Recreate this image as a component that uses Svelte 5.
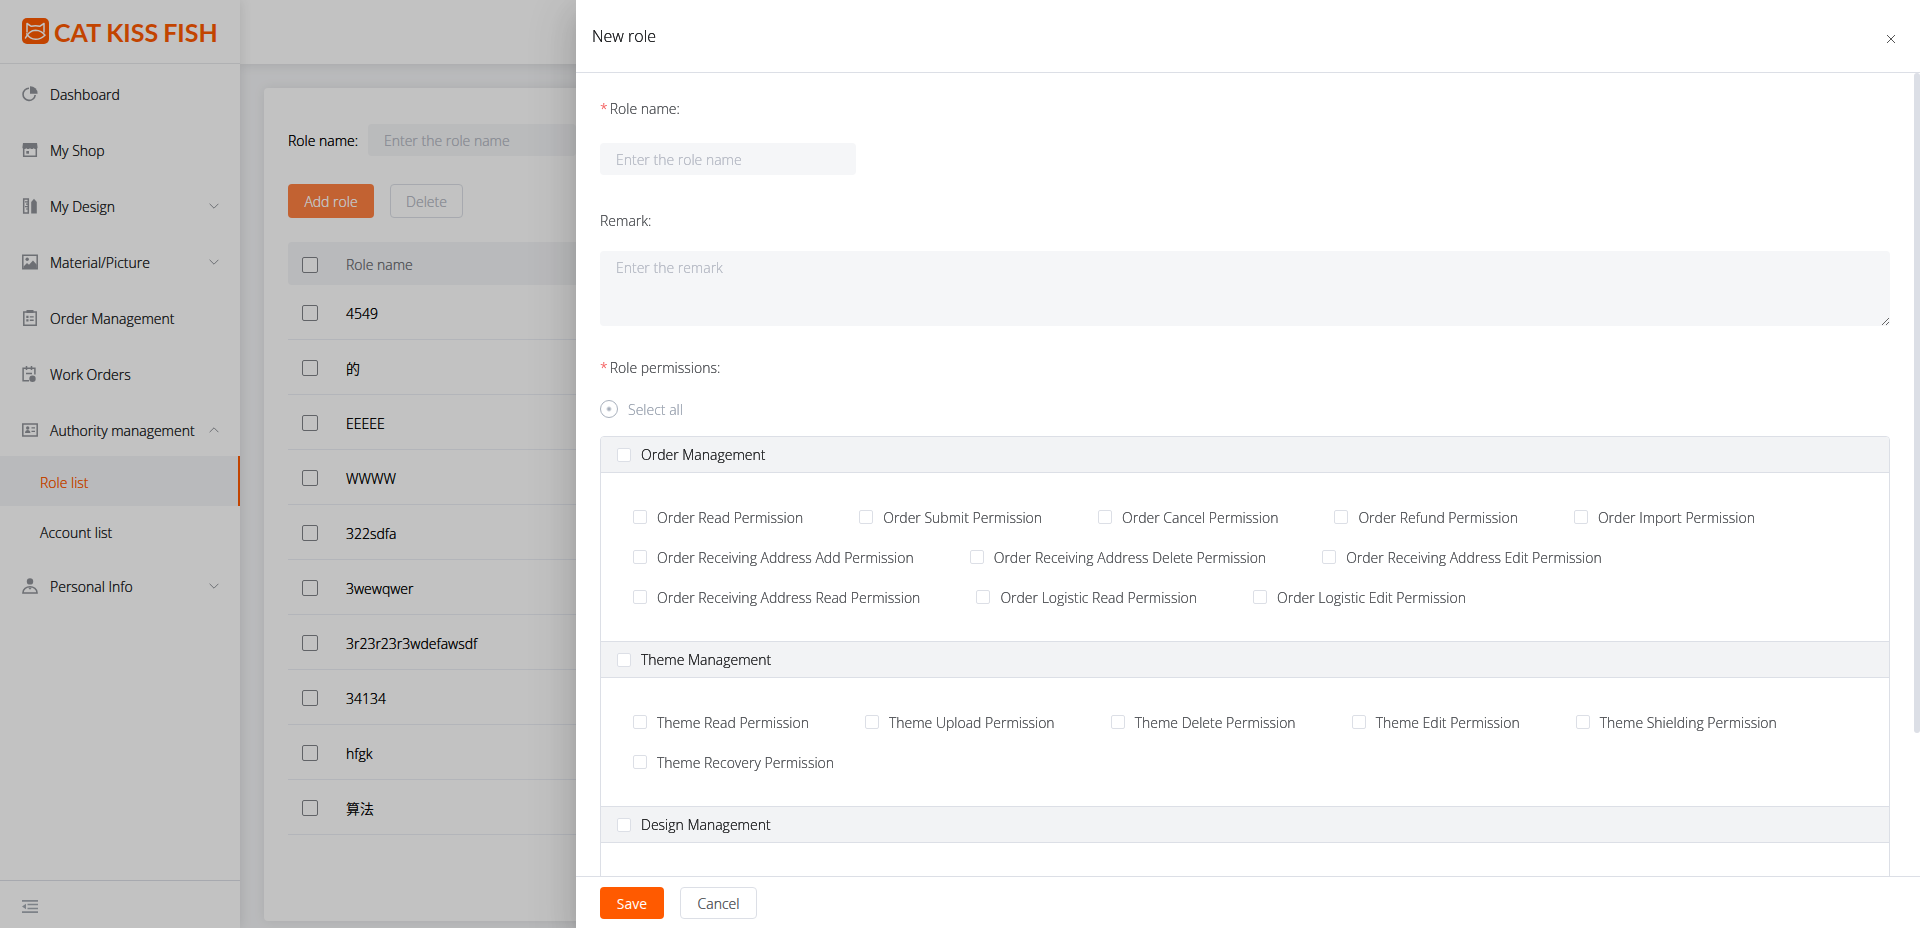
<script lang="ts">
  interface MenuItem {
    label: string;
    icon: string;
    arrow?: "up" | "down";
    children?: string[];
  }

  interface Group {
    name: string;
    permissions: string[];
  }

  const menu: MenuItem[] = [
    { label: "Dashboard", icon: "pie" },
    { label: "My Shop", icon: "shop" },
    { label: "My Design", icon: "design", arrow: "down" },
    { label: "Material/Picture", icon: "picture", arrow: "down" },
    { label: "Order Management", icon: "order" },
    { label: "Work Orders", icon: "work" },
    { label: "Authority management", icon: "card", arrow: "up", children: ["Role list", "Account list"] },
    { label: "Personal Info", icon: "user", arrow: "down" },
  ];

  const roles = ["4549", "的", "EEEEE", "WWWW", "322sdfa", "3wewqwer", "3r23r23r3wdefawsdf", "34134", "hfgk", "算法"];

  const groups: Group[] = [
    {
      name: "Order Management",
      permissions: [
        "Order Read Permission",
        "Order Submit Permission",
        "Order Cancel Permission",
        "Order Refund Permission",
        "Order Import Permission",
        "Order Receiving Address Add Permission",
        "Order Receiving Address Delete Permission",
        "Order Receiving Address Edit Permission",
        "Order Receiving Address Read Permission",
        "Order Logistic Read Permission",
        "Order Logistic Edit Permission",
      ],
    },
    {
      name: "Theme Management",
      permissions: [
        "Theme Read Permission",
        "Theme Upload Permission",
        "Theme Delete Permission",
        "Theme Edit Permission",
        "Theme Shielding Permission",
        "Theme Recovery Permission",
      ],
    },
    { name: "Design Management", permissions: [] },
  ];

  let activeItem = $state("Role list");
  let filterName = $state("");
  let roleName = $state("");
  let remark = $state("");
  let selected = $state<string[]>([]);

  let viewHeight = $state(1);
  let formHeight = $state(1);
  let scrollTop = $state(0);
  let ratio = $derived(Math.min(1, viewHeight / formHeight));

  const allPermissions = groups.flatMap((g) => g.permissions);

  function toggleGroup(group: Group, checked: boolean) {
    const rest = selected.filter((p) => !group.permissions.includes(p));
    selected = checked ? [...rest, ...group.permissions] : rest;
  }
</script>

{#snippet menuIcon(name: string)}
  <svg class="menu-icon" viewBox="0 0 16 16" aria-hidden="true">
    {#if name === "pie"}
      <path d="M7 2.2A6.1 6.1 0 1 0 13.2 9" fill="none" stroke="currentColor" stroke-width="1.6" />
      <path d="M8 0.2A7.4 7.4 0 0 1 15.6 7.7H8z" />
    {:else if name === "shop"}
      <path d="M1 1h14l.6 4.5c0 .9-.8 1.5-1.9 1.5s-1.900-.6-1.900-1.300c0 .7-.8 1.300-1.900 1.300S8 6.400 8 5.700C8 6.400 7.200 7 6.100 7s-1.900-.6-1.900-1.300C4.200 6.400 3.400 7 2.300 7S.4 6.400.4 5.500z" />
      <path d="M1.700 6v8.300h12.600V6" fill="none" stroke="currentColor" stroke-width="1.5" />
      <path d="M4.300 9h2.700v2.700H4.300z" />
    {:else if name === "design"}
      <path d="M1.700 1h4.600v14H1.700z" fill="none" stroke="currentColor" stroke-width="1.5" />
      <path d="M3 3.800h3M4 6.200h2M3 8.600h3M4 11h2" stroke="currentColor" stroke-width="1.2" />
      <path d="M9.200 4L12 .7 14.800 4v11.500H9.200z" />
    {:else if name === "picture"}
      <path d="M.8 1.200h14.400v13.600H.8z" fill="none" stroke="currentColor" stroke-width="1.5" />
      <circle cx="5.2" cy="5.2" r="1.7" />
      <path d="M1.500 12.500L5 9l2 1.800 4-4.300 3.800 4.300v3.700H1.500z" />
    {:else if name === "order"}
      <path d="M1.800 2h12.400v13.200H1.800z" fill="none" stroke="currentColor" stroke-width="1.5" />
      <path d="M4.500 0h7v3h-7zM4.300 5.800h2.200V8H4.300zM7.800 6.200h3.900v1.400H7.800zM4.300 9.200h2.200v2.200H4.300zM7.800 9.600h3.900V11H7.800z" />
    {:else if name === "work"}
      <path d="M7 14.700H1.100V2.300h11.800V8.500M4.500 0v4M9.500 0v4M4 7.500h6" fill="none" stroke="currentColor" stroke-width="1.5" />
      <circle cx="10.5" cy="12.7" r="3.2" />
    {:else if name === "card"}
      <path d="M.8 2h14.400v12H.8z" fill="none" stroke="currentColor" stroke-width="1.5" />
      <circle cx="5.7" cy="6" r="1.7" />
      <path d="M3 11c0-4 5.400-4 5.400 0zM9.500 5.200H13v1.200H9.500zM9.500 8.800H13V10H9.500z" />
    {:else}
      <circle cx="8" cy="3.4" r="3.2" />
      <path d="M.9 14.900c0-8.200 14.200-8.200 14.200 0z" fill="none" stroke="currentColor" stroke-width="1.5" />
      <path d="M6.300 9.800h3.400L8 11.800z" />
    {/if}
  </svg>
{/snippet}

<div class="layout">
  <aside class="sidebar">
    <a class="logo" href="#home" aria-label="CAT KISS FISH">
      <svg class="logo-mark" viewBox="0 0 27 27" aria-hidden="true">
        <rect width="27" height="26" rx="5" fill="#ff5a00" />
        <g fill="none" stroke="#fff" stroke-width="1.5" stroke-linecap="round" stroke-linejoin="round">
          <path d="M5 14V5.500L9.300 8.300Q13.500 7 17.700 8.300L22 5.500V14" />
          <path d="M3.500 20Q7 12.500 13.500 12.300Q19.500 12.500 23 17.200Q18 21.500 13.500 21.300Q8 21 4.700 15.800" />
        </g>
      </svg>
      <span class="logo-text"><span>CAT</span><span>KISS</span><span>FISH</span></span>
    </a>

    <nav class="menu">
      {#each menu as item (item.label)}
        <a class="menu-item" href="#menu">
          {@render menuIcon(item.icon)}
          <span class="menu-label">{item.label}</span>
          {#if item.arrow}
            <svg class="chevron" class:up={item.arrow === "up"} viewBox="0 0 10 10" aria-hidden="true">
              <path d="M0.6 2.8L5 7.2L9.4 2.8" />
            </svg>
          {/if}
        </a>
        {#each item.children ?? [] as child (child)}
          <a class="submenu-item" class:active={activeItem === child} href="#menu" onclick={() => (activeItem = child)}>{child}</a>
        {/each}
      {/each}
    </nav>

    <div class="sidebar-footer">
      <button class="collapse" aria-label="Collapse menu">
        <svg viewBox="0 0 16 16" aria-hidden="true">
          <path d="M0 1h16v1.700H0zM5.500 4.700H16v1.500H5.500zM5.500 8.800H16v1.500H5.500zM0 12.300h16V14H0zM0 7.500L4 4.800v5.400z" />
        </svg>
      </button>
    </div>
  </aside>

  <div class="content">
    <header class="topbar"></header>
    <main class="page">
      <section class="card">
        <div class="filter">
          <label for="filter-name">Role name:</label>
          <input id="filter-name" class="field" type="text" placeholder="Enter the role name" bind:value={filterName} />
        </div>
        <div class="actions">
          <button class="btn add">Add role</button>
          <button class="btn delete" disabled>Delete</button>
        </div>
        <table class="roles">
          <thead>
            <tr>
              <th class="check-col"><input type="checkbox" aria-label="Select all roles" /></th>
              <th>Role name</th>
            </tr>
          </thead>
          <tbody>
            {#each roles as role (role)}
              <tr>
                <td class="check-col"><input type="checkbox" aria-label={role} /></td>
                <td>{role}</td>
              </tr>
            {/each}
          </tbody>
        </table>
      </section>
    </main>
  </div>
</div>

<div class="overlay">
  <div class="drawer" role="dialog" aria-labelledby="drawer-title">
    <header class="drawer-header">
      <h2 id="drawer-title">New role</h2>
      <button class="close" aria-label="Close">
        <svg viewBox="0 0 10 10" aria-hidden="true"><path d="M1 1L9 9M9 1L1 9" /></svg>
      </button>
    </header>

    <div class="drawer-body">
      <div class="scroller" bind:clientHeight={viewHeight} onscroll={(e) => (scrollTop = e.currentTarget.scrollTop)}>
        <form class="form" bind:clientHeight={formHeight}>
          <div class="form-item">
            <label class="form-label required" for="role-name">Role name:</label>
            <input id="role-name" class="field" type="text" placeholder="Enter the role name" bind:value={roleName} />
          </div>
          <div class="form-item remark">
            <label class="form-label" for="remark">Remark:</label>
            <textarea id="remark" class="field" placeholder="Enter the remark" bind:value={remark}></textarea>
          </div>
          <div class="form-label required">Role permissions:</div>
          <label class="select-all">
            <input type="radio" name="select-all" onchange={() => (selected = [...allPermissions])} />
            <span>Select all</span>
          </label>

          <div class="groups">
            {#each groups as group (group.name)}
              <section class="group">
                <label class="group-head">
                  <input class="check" type="checkbox" onchange={(e) => toggleGroup(group, e.currentTarget.checked)} />
                  <span>{group.name}</span>
                </label>
                <div class="group-body">
                  {#each group.permissions as permission (permission)}
                    <label class="permission">
                      <input class="check" type="checkbox" value={permission} bind:group={selected} />
                      <span>{permission}</span>
                    </label>
                  {/each}
                </div>
              </section>
            {/each}
          </div>
        </form>
      </div>
      {#if ratio < 1}
        <div class="thumb" style="height: {viewHeight * ratio}px; top: {scrollTop * ratio}px"></div>
      {/if}
    </div>

    <footer class="drawer-footer">
      <button class="btn save">Save</button>
      <button class="btn cancel">Cancel</button>
    </footer>
  </div>
</div>

<style>
  /* the zero-offset shadow firms up the thin strokes of the light face */
  :global(body) {
    margin: 0;
    font-family: "Open Sans", "Noto Sans CJK SC", sans-serif;
    font-size: 14px;
    font-weight: 300;
    color: #000;
    text-shadow: 0 0 0 currentColor;
  }

  :global(*) {
    box-sizing: border-box;
  }

  a {
    color: inherit;
    text-decoration: none;
  }

  button,
  input,
  textarea {
    font: inherit;
    text-shadow: 0 0 0 currentColor;
    margin: 0;
  }

  .layout {
    display: flex;
    height: 100vh;
    overflow: hidden;
  }

  .sidebar {
    position: relative;
    z-index: 2;
    width: 240px;
    flex: none;
    display: flex;
    flex-direction: column;
    background: #fff;
    color: #222426;
    box-shadow: 0 0 12px rgba(0, 0, 0, 0.12);
  }

  .logo {
    display: flex;
    align-items: center;
    gap: 5px;
    height: 64px;
    padding-left: 22px;
    border-bottom: 1px solid #e8e9eb;
    color: #ff5a00;
    text-shadow: none;
  }

  .logo-mark {
    width: 27px;
    height: 27px;
  }

  .logo-text {
    display: flex;
    gap: 5px;
    font-family: Lato, sans-serif;
    font-size: 25px;
    font-weight: 700;
    line-height: 26px;
  }

  .menu {
    flex: 1;
  }

  .menu-item {
    display: flex;
    align-items: center;
    height: 56px;
    padding: 4px 21px 0 22px;
  }

  .menu-icon {
    width: 16px;
    height: 16px;
    margin-right: 12px;
    color: #909399;
    fill: currentColor;
  }

  .menu-label {
    flex: 1;
    white-space: nowrap;
  }

  .chevron {
    width: 10px;
    height: 10px;
    fill: none;
    stroke: #909399;
    stroke-width: 1;
  }

  .chevron.up {
    transform: rotate(180deg);
  }

  .submenu-item {
    display: flex;
    align-items: center;
    height: 50px;
    padding: 3px 0 0 40px;
    border-right: 2px solid transparent;
  }

  .submenu-item.active {
    background: #f4f5f7;
    border-right-color: #ff5a00;
    color: #ff5a00;
  }

  .sidebar-footer {
    height: 48px;
    padding: 18px 22px 0;
    border-top: 1px solid #dcdfe6;
  }

  .collapse {
    display: block;
    width: 16px;
    height: 16px;
    padding: 0;
    border: 0;
    background: none;
    cursor: pointer;
  }

  .collapse svg {
    display: block;
    fill: #a5abb3;
  }

  .content {
    flex: 1;
    display: flex;
    flex-direction: column;
    background: #f4f5f7;
  }

  .topbar {
    height: 64px;
    background: #fff;
    box-shadow: 0 0 12px rgba(0, 0, 0, 0.12);
  }

  .page {
    flex: 1;
    display: flex;
    padding: 24px 24px 7px;
  }

  .card {
    flex: 1;
    padding: 36px 24px 24px;
    border-radius: 4px;
    background: #fff;
    box-shadow: 0 0 12px rgba(0, 0, 0, 0.08);
  }

  .filter {
    display: flex;
    align-items: center;
  }

  .filter label {
    width: 80px;
  }

  .field {
    display: block;
    border: 0;
    border-radius: 4px;
    background: #f5f6f8;
    color: #606266;
    padding: 0 16px;
  }

  input.field {
    width: 256px;
    height: 32px;
  }

  .filter input.field {
    width: 208px;
  }

  .field::placeholder {
    color: #b8bcc6;
  }

  .actions {
    display: flex;
    gap: 16px;
    margin: 28px 0 24px;
  }

  .btn {
    height: 34px;
    padding: 0 16px;
    border: 0;
    border-radius: 4px;
    background: #fff;
    cursor: pointer;
  }

  .add {
    width: 86px;
    padding: 0;
    background: #ff8142;
    color: #fff;
  }

  .delete {
    width: 73px;
    padding: 0;
    border: 1px solid #dcdfe6;
    color: #b8bcc6;
  }

  .roles {
    width: 100%;
    border-collapse: separate;
    border-spacing: 0;
  }

  th,
  td {
    padding: 2px 0 0;
    text-align: left;
    font-weight: inherit;
  }

  th {
    height: 43px;
    background: #f4f5f7;
    color: #707378;
  }

  th:first-child {
    border-radius: 4px 0 0 4px;
  }

  td {
    height: 55px;
    border-bottom: 1px solid #ebeef5;
  }

  .roles .check-col {
    width: 58px;
    padding-left: 14px;
  }

  input[type="checkbox"],
  input[type="radio"] {
    appearance: none;
    display: block;
    flex: none;
    background: #fff;
    cursor: pointer;
  }

  .roles input {
    width: 16px;
    height: 16px;
    border: 1px solid #808388;
    border-radius: 2px;
  }

  .overlay {
    position: fixed;
    inset: 0;
    z-index: 10;
    display: flex;
    justify-content: flex-end;
    background: rgba(0, 0, 0, 0.24);
  }

  .drawer {
    width: 70%;
    display: flex;
    flex-direction: column;
    background: #fff;
    box-shadow:
      0 16px 48px 16px rgba(0, 0, 0, 0.08),
      0 12px 32px rgba(0, 0, 0, 0.12),
      0 8px 16px -8px rgba(0, 0, 0, 0.16);
  }

  .drawer-header {
    display: flex;
    align-items: center;
    justify-content: space-between;
    height: 73px;
    padding: 0 20px 0 16px;
    border-bottom: 1px solid #dcdfe6;
  }

  h2 {
    margin: 0;
    font-size: 16px;
    font-weight: inherit;
    color: #1d1e20;
  }

  .close {
    width: 18px;
    height: 18px;
    margin-top: 6px;
    padding: 4px;
    border: 0;
    background: none;
    cursor: pointer;
  }

  .close svg {
    display: block;
    stroke: #555;
    stroke-width: 1;
  }

  .drawer-body {
    position: relative;
    flex: 1;
    min-height: 0;
  }

  .scroller {
    height: 100%;
    overflow-y: auto;
    scrollbar-width: none;
  }

  .thumb {
    position: absolute;
    right: 0;
    width: 6px;
    border-radius: 3px;
    background: #dcdfe6;
  }

  .form {
    padding: 20px 30px 38px 24px;
    color: #55575b;
  }

  .form-item {
    display: flex;
    flex-direction: column;
    gap: 18px;
    margin-bottom: 30px;
  }

  .form-item.remark {
    gap: 14px;
    margin-bottom: 26px;
  }

  .form-label {
    display: block;
    line-height: 32px;
  }

  .required::before {
    content: "*";
    margin-right: 2px;
    color: #f56c6c;
  }

  textarea.field {
    width: 100%;
    height: 75px;
    padding: 6px 16px;
    line-height: 21px;
    resize: vertical;
  }

  .select-all {
    display: flex;
    align-items: center;
    gap: 10px;
    width: max-content;
    height: 18px;
    margin: 16px 0 18px;
    color: #a0a8b4;
    cursor: pointer;
  }

  .select-all input {
    width: 18px;
    height: 18px;
    border: 1px solid #a8b0bc;
    border-radius: 50%;
    background: radial-gradient(circle, #a8b0bc 1px, #fff 3px);
  }

  .groups {
    border: 1px solid #dcdfe6;
    border-radius: 4px;
    overflow: hidden;
  }

  .group + .group {
    border-top: 1px solid #dcdfe6;
  }

  .group:last-child {
    min-height: 205px;
  }

  .group-head {
    display: flex;
    align-items: center;
    gap: 10px;
    height: 36px;
    padding-left: 16px;
    border-bottom: 1px solid #dcdfe6;
    background: #f2f3f5;
    color: #222325;
  }

  .group-body {
    display: flex;
    flex-wrap: wrap;
    padding: 24px 32px;
  }

  .permission {
    display: flex;
    align-items: center;
    gap: 10px;
    height: 40px;
    margin-right: 56px;
    white-space: nowrap;
    cursor: pointer;
  }

  .check {
    width: 14px;
    height: 14px;
    border: 1px solid #dcdfe6;
    border-radius: 2px;
  }

  input[type="checkbox"]:checked {
    border-color: #ff5a00;
    background: #ff5a00;
  }

  .drawer-footer {
    display: flex;
    gap: 16px;
    height: 52px;
    padding: 10px 24px 0;
    border-top: 1px solid #dcdfe6;
  }

  .drawer-footer .btn {
    height: 32px;
  }

  .save {
    width: 64px;
    background: #ff5a00;
    color: #fff;
    font-weight: 500;
    text-shadow: none;
  }

  .drawer-footer .cancel {
    width: 77px;
    border: 1px solid #dcdfe6;
    color: #55575b;
  }
</style>
